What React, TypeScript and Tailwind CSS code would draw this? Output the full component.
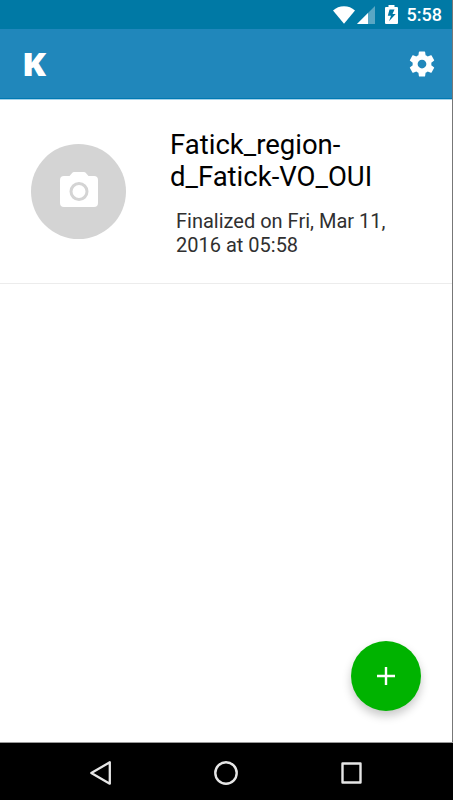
import { useState } from "react";

interface FormEntry {
  id: number;
  title: string;
  status: string;
}

const ENTRIES: FormEntry[] = [
  {
    id: 1,
    title: "Fatick_region-d_Fatick-VO_OUI",
    status: "Finalized on Fri, Mar 11, 2016 at 05:58",
  },
];

function StatusBar() {
  return (
    <div className="flex h-[29px] shrink-0 items-center justify-end bg-[#0079a5] pr-[10px] text-white">
      <svg width="22" height="18" viewBox="0 0 22 18" className="mr-[2px]" fill="currentColor">
        <path d="M0 4.6C3 1.8 6.800.3 11 .3s8 1.500 11 4.300L11 17.800z" />
      </svg>
      <svg width="18" height="18" viewBox="0 0 18 18" className="mr-[10px]" fill="currentColor">
        <path d="M18 0v18H0z" opacity="0.35" />
        <path d="M11 7v11H0z" />
      </svg>
      <svg width="13" height="19" viewBox="0 0 13 19" className="mr-[9px]">
        <path fill="#fff" d="M3.500 0h6v2h2.500q1 0 1 1v15q0 1-1 1H1q-1 0-1-1V3q0-1 1-1h2.500z" />
        <path fill="#0079a5" d="M9.500 4.500H4.500L2.800 10.800H6L4 16.300 10.700 9H7.500z" />
      </svg>
      <span className="text-[18px] leading-none font-medium">5:58</span>
    </div>
  );
}

function Toolbar() {
  return (
    <header className="flex h-[70px] shrink-0 items-center justify-between border-b border-[#0079b3] bg-[#2087bb] pr-[15px] pl-[22px] text-white">
      <span className="origin-left scale-x-110 font-['Open_Sans','Noto_Sans',sans-serif] text-[32px] leading-none font-extrabold">
        K
      </span>
      <button aria-label="Settings">
        <svg width="30" height="30" viewBox="0 0 24 24" fill="currentColor">
          <path d="M19.430 12.980c.04-.32.07-.64.07-.98s-.03-.66-.07-.98l2.110-1.650c.19-.15.24-.42.12-.64l-2-3.460c-.12-.22-.39-.3-.61-.22l-2.490 1c-.52-.4-1.080-.73-1.690-.98l-.38-2.650A.488.488 0 0 0 14 2h-4c-.25 0-.46.18-.49.42l-.38 2.650c-.61.25-1.170.59-1.690.98l-2.490-1c-.23-.09-.49 0-.61.22l-2 3.460c-.13.22-.07.49.12.64l2.110 1.650c-.04.32-.07.65-.07.98s.03.66.07.98l-2.110 1.650c-.19.15-.24.42-.12.64l2 3.460c.12.22.39.3.61.22l2.490-1c.52.4 1.080.73 1.690.98l.38 2.650c.03.24.24.42.49.42h4c.25 0 .46-.18.49-.42l.38-2.650c.61-.25 1.170-.59 1.690-.98l2.490 1c.23.09.49 0 .61-.22l2-3.460c.12-.22.07-.49-.12-.64l-2.110-1.650zM12 15.500c-1.930 0-3.500-1.570-3.500-3.500s1.570-3.500 3.500-3.500 3.500 1.570 3.500 3.500-1.570 3.500-3.500 3.500z" />
        </svg>
      </button>
    </header>
  );
}

function EntryRow({ entry }: { entry: FormEntry }) {
  return (
    <li className="flex h-[184px] items-start border-b border-[#ececec] pl-[31px]">
      <div className="mt-[44px] flex size-[95px] shrink-0 items-center justify-center rounded-full bg-[#d4d4d4] pb-[5px]">
        <svg width="38" height="35" viewBox="0 0 38 35" fill="none">
          <path fill="#fff" d="M14 0h10q1 0 1.700.8L28.500 4H34q4 0 4 4v23q0 4-4 4H4q-4 0-4-4V8q0-4 4-4h5.500l2.800-3.200Q13 0 14 0z" />
          <circle cx="19" cy="19.500" r="8" stroke="#d4d4d4" strokeWidth="3" />
        </svg>
      </div>
      <div className="mt-[29px] ml-[44px] w-[232px]">
        <h2 className="text-[27.5px] leading-[32px] text-black">{entry.title}</h2>
        <p className="mt-[16px] ml-[6px] text-[20px] leading-[24px] text-[#303030]">{entry.status}</p>
      </div>
    </li>
  );
}

function NavigationBar() {
  return (
    <nav className="flex h-[58px] shrink-0 items-center border-t border-[#999] bg-black pt-[2px] pl-[89px]">
      <button aria-label="Back" className="mr-[102px]">
        <svg width="23" height="26" viewBox="0 0 23 26" fill="none" stroke="#e6e6e6" strokeWidth="2.300" strokeLinejoin="round">
          <path d="M20.800 2.300v21.400L2.300 13z" />
        </svg>
      </button>
      <button aria-label="Home" className="mr-[102px]">
        <svg width="24" height="26" viewBox="0 0 24 26" fill="none" stroke="#e6e6e6" strokeWidth="2.400">
          <circle cx="12" cy="13" r="10.700" />
        </svg>
      </button>
      <button aria-label="Recent apps">
        <svg width="24" height="26" viewBox="0 0 24 26" fill="none" stroke="#e6e6e6" strokeWidth="2.400" strokeLinejoin="round">
          <rect x="2.500" y="3.500" width="18" height="19" />
        </svg>
      </button>
    </nav>
  );
}

export default function App() {
  const [entries] = useState<FormEntry[]>(ENTRIES);

  return (
    <div className="flex h-[800px] w-[453px] flex-col bg-white font-['Roboto','Noto_Sans',sans-serif]">
      <div className="flex flex-1 flex-col border-r border-[#777]">
        <StatusBar />
        <Toolbar />
        <main className="relative flex-1 border-t border-[#a6d3e9] bg-white">
          <ul>
            {entries.map((entry) => (
              <EntryRow key={entry.id} entry={entry} />
            ))}
          </ul>

          {/* Floating add button */}
          <button
            aria-label="Add"
            className="absolute right-[31px] bottom-[31px] flex size-[70px] items-center justify-center rounded-full bg-[#00b300] shadow-[0_5px_10px_rgba(0,0,0,0.22)]"
          >
            <svg width="18" height="18" viewBox="0 0 18 18" fill="#fff">
              <path d="M7.800 0h2.400v7.800H18v2.400h-7.800V18H7.800v-7.800H0V7.800h7.800z" />
            </svg>
          </button>
        </main>
      </div>
      <NavigationBar />
    </div>
  );
}
